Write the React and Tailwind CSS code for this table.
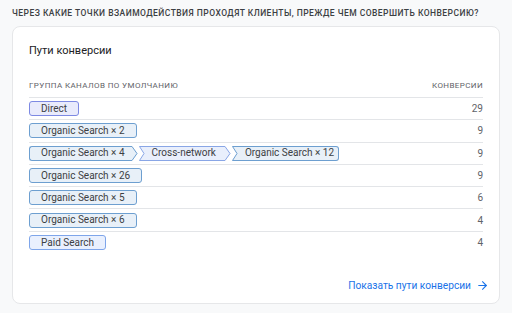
import { ArrowRight } from 'lucide-react'

// цвета чипов по каналу
const TONES = {
  direct: { bg: '#e9ebfc', border: '#7d89e3' },
  organic: { bg: '#e8f0f8', border: '#6d9fd0' },
  cross: { bg: '#e9effc', border: '#89a6e6' },
  paid: { bg: '#e9f0fe', border: '#7ea5ea' },
}

const ROWS = [
  { path: [['Direct', 'direct']], value: 29 },
  { path: [['Organic Search × 2', 'organic']], value: 9 },
  {
    path: [
      ['Organic Search × 4', 'organic'],
      ['Cross-network', 'cross'],
      ['Organic Search × 12', 'organic'],
    ],
    value: 9,
  },
  { path: [['Organic Search × 26', 'organic']], value: 9 },
  { path: [['Organic Search × 5', 'organic']], value: 6 },
  { path: [['Organic Search × 6', 'organic']], value: 4 },
  { path: [['Paid Search', 'paid']], value: 4 },
]

function Notch({ tone }) {
  return (
    <svg width="6" height="15" className="block shrink-0">
      <polygon points="0,0 6,0 6,15 0,15 5,7.5" fill={tone.bg} />
      <polyline points="6,0.5 0.5,0.5 5,7.5 0.5,14.5 6,14.5" fill="none" stroke={tone.border} strokeWidth="1" />
    </svg>
  )
}

function Tip({ tone }) {
  return (
    <svg width="6" height="15" className="block shrink-0">
      <polygon points="0,0 5.5,7.5 0,15" fill={tone.bg} />
      <polyline points="0,0.5 5,7.5 0,14.5" fill="none" stroke={tone.border} strokeWidth="1" />
    </svg>
  )
}

function Chip({ label, kind, first, last }) {
  const tone = TONES[kind]
  let pad = first ? 'rounded-l-[3px] border-l pl-[11px] ' : 'pl-[7px] '
  if (last) pad += first ? 'rounded-r-[3px] border-r pr-[11px]' : 'rounded-r-[3px] border-r pr-[4px]'
  else pad += first ? 'pr-[7px]' : 'pr-[9px]'
  return (
    <div className="flex h-[15px] items-stretch">
      {!first && <Notch tone={tone} />}
      <div
        className={'flex items-center border-y text-[10px] leading-none text-[#3c4043] ' + pad}
        style={{ background: tone.bg, borderColor: tone.border }}
      >
        {label}
      </div>
      {!last && <Tip tone={tone} />}
    </div>
  )
}

export default function App() {
  return (
    <div className="w-[512px] h-[313px] bg-[#f8f9fa] px-3 pt-[7px] font-['Roboto',sans-serif]">
      <div className="text-[8.5px] leading-3 font-medium uppercase tracking-[0.46px] text-[#3c4043]">
        Через какие точки взаимодействия проходят клиенты, прежде чем совершить конверсию?
      </div>

      <div className="mt-[7px] h-[278px] rounded-lg border border-[#e6e7e9] bg-white px-4 pt-[17px] flex flex-col">
        <div className="text-[11px] leading-[14px] text-[#202124]">Пути конверсии</div>

        <div className="mt-[23px] flex items-center justify-between text-[8px] leading-[10px] uppercase tracking-[0.4px] text-[#5f6368]">
          <span>Группа каналов по умолчанию</span>
          <span>Конверсии</span>
        </div>

        <div className="mt-[6px] border-t border-[#e3e5e8]">
          {ROWS.map((row, i) => (
            <div
              key={i}
              className={
                'flex h-[22.3px] items-center justify-between ' +
                (i < ROWS.length - 1 ? 'border-b border-[#e3e5e8]' : '')
              }
            >
              <div className="flex items-center gap-[1px]">
                {row.path.map(([label, kind], j) => (
                  <Chip key={j} label={label} kind={kind} first={j === 0} last={j === row.path.length - 1} />
                ))}
              </div>
              <span className="text-[10px] text-[#5f6368]">{row.value}</span>
            </div>
          ))}
        </div>

        <div className="mt-auto mb-[10px] flex items-center justify-end gap-[5px] text-[10.2px] text-[#1a73e8]">
          <span>Показать пути конверсии</span>
          <ArrowRight size={13} strokeWidth={2} className="mr-[-6px]" />
        </div>
      </div>
    </div>
  )
}
